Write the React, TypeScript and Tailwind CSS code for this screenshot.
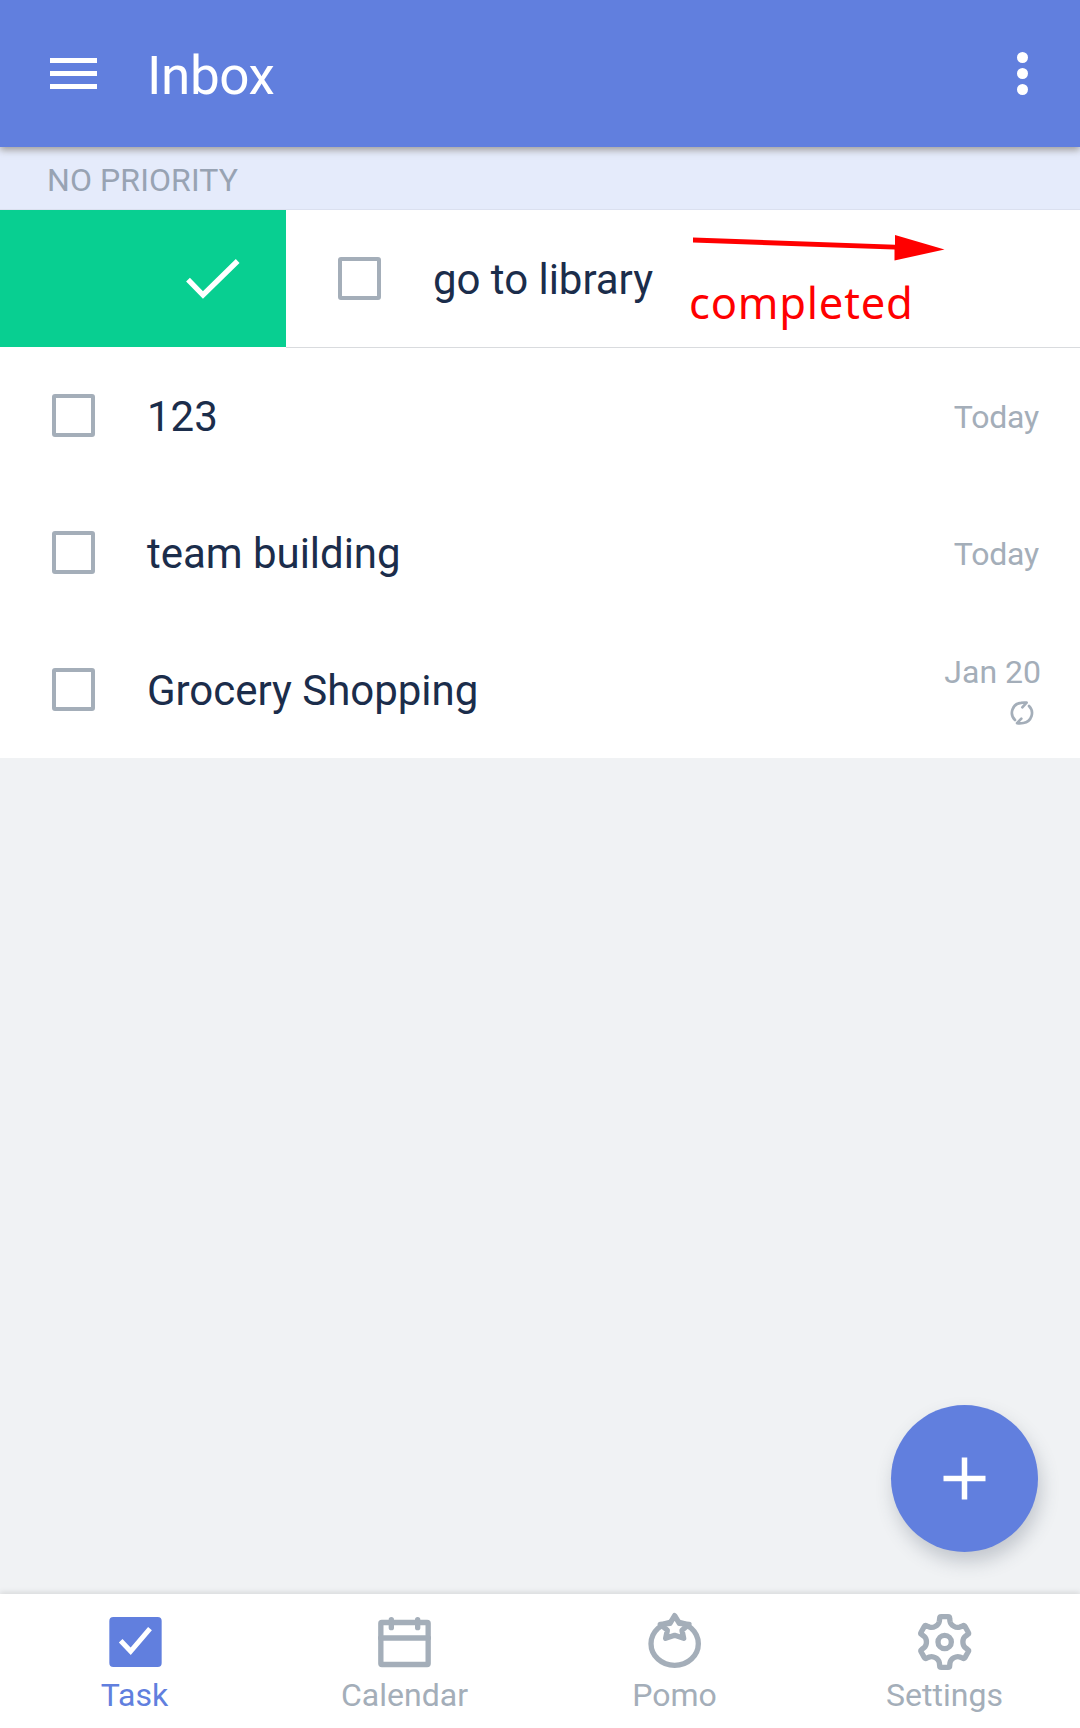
import React from "react";

const GRAY = "#a4aeb9";
const BLUE = "#617fde";

function Checkbox() {
  return <span className="block h-[43px] w-[43px] shrink-0 rounded-[3px] border-4 border-[#a4aeb9]" />;
}

function RepeatIcon() {
  return (
    <svg width="26" height="26" viewBox="387 180 78 78" fill="none" stroke={GRAY} strokeWidth="8" strokeLinecap="round" strokeLinejoin="round">
      <path d="M405 240A30 30 0 0 1 423 188.500Q432 187 440 188L427 202" />
      <path d="M447 198A30 30 0 0 1 430 249Q420 251 411 249.500L424 236" />
    </svg>
  );
}

function TaskRow({ title, date, repeat }: { title: string; date: string; repeat?: boolean }) {
  return (
    <li className="flex h-[137px] items-center bg-white pr-[41px] pl-[52px]">
      <Checkbox />
      <span className="ml-[52px] grow pt-[2px] text-[42px] leading-[50px] tracking-[-0.03px] text-[#1b2d4b]">{title}</span>
      <div className="flex flex-col items-end text-[32px] leading-[38px] tracking-[-0.2px] text-[#a4aeb9]">
        <span className={repeat ? "-mr-[2px] tracking-normal" : "mt-[3px]"}>{date}</span>
        {repeat && (
          <span className="mt-[9px] mr-[4px]">
            <RepeatIcon />
          </span>
        )}
      </div>
    </li>
  );
}

const gearPath = (() => {
  const cx = 224;
  const cy = 186;
  const at = (x: number, y: number, deg: number) => {
    const a = (deg * Math.PI) / 180;
    return `${(cx + x * Math.cos(a) - y * Math.sin(a)).toFixed(1)} ${(cy + x * Math.sin(a) + y * Math.cos(a)).toFixed(1)}`;
  };
  let d = "";
  for (let i = 0; i < 6; i++) {
    const r = i * 60;
    d += `${i === 0 ? "M" : "L"}${at(-10, -76, r)}L${at(10, -76, r)}Q${at(15, -76, r)} ${at(15, -71, r)}L${at(16, -62, r)}`;
    d += `C${at(18, -50, r)} ${at(-18, -50, r + 60)} ${at(-16, -62, r + 60)}L${at(-15, -71, r + 60)}Q${at(-15, -76, r + 60)} ${at(-10, -76, r + 60)}`;
  }
  return d + "Z";
})();

function NavItem({ label, active, children }: { label: string; active?: boolean; children: React.ReactNode }) {
  return (
    <button className={`flex flex-col items-center pt-4 ${active ? "text-[#617fde]" : "text-[#a4aeb9]"}`}>
      <svg width="60" height="62" viewBox="135 90 180 186" fill="none" stroke="currentColor" strokeWidth="16" strokeLinejoin="round" strokeLinecap="round">
        {children}
      </svg>
      <span className="mr-px text-[32px] leading-[46px]">{label}</span>
    </button>
  );
}

export default function App() {
  return (
    <div className="relative flex h-[1728px] w-[1080px] flex-col overflow-hidden bg-[#f0f2f4] font-['Roboto',sans-serif]">
      <header className="relative z-10 flex h-[147px] shrink-0 items-center bg-[#617fde] pr-[52px] pl-[50px] text-white shadow-[0_3px_7px_rgba(90,80,60,0.5)]">
        <div className="flex w-[47px] flex-col gap-[8px]">
          <span className="h-[5px] bg-white" />
          <span className="h-[5px] bg-white" />
          <span className="h-[5px] bg-white" />
        </div>
        <h1 className="ml-[50px] grow pt-[4px] text-[53px] leading-[60px] tracking-[-0.4px]">Inbox</h1>
        <div className="flex flex-col gap-[5px]">
          <span className="h-[11px] w-[11px] rounded-full bg-white" />
          <span className="h-[11px] w-[11px] rounded-full bg-white" />
          <span className="h-[11px] w-[11px] rounded-full bg-white" />
        </div>
      </header>

      <main className="grow">
        <h2 className="h-[63px] border-b border-[#dbe0ef] bg-[#e5ebfb] pt-[2px] pl-[47px] text-[32px] leading-[62px] tracking-[0.1px] text-[#98a3b3]">NO PRIORITY</h2>
        <ul>
          <li className="flex h-[137px] bg-white">
            <div className="flex w-[286px] shrink-0 items-center justify-end bg-[#08cf91] pr-[43px]">
              <svg width="60" height="46" viewBox="549 166 180 138" fill="none" stroke="white" strokeWidth="16">
                <path d="M564 237L609 283L713 181" />
              </svg>
            </div>
            <div className="relative flex grow items-center pl-[52px] shadow-[0_1px_0_#d9dbde]">
              <Checkbox />
              <span className="ml-[52px] pt-[2px] text-[42px] leading-[50px] tracking-[-0.03px] text-[#1b2d4b]">go to library</span>
              <svg className="absolute top-[23px] left-[406px]" width="254" height="30" viewBox="0 0 254 30">
                <path d="M1 4.500L203 11.700V2L252.500 16.500L202.500 27.500V16.600L1 9.500Z" fill="#ff0000" />
              </svg>
              <span className="absolute top-[62px] left-[403px] font-['Noto_Sans',sans-serif] text-[43.500px] leading-[60px] tracking-[0.8px] text-[#ff0000]">completed</span>
            </div>
          </li>
          <TaskRow title="123" date="Today" />
          <TaskRow title="team building" date="Today" />
          <TaskRow title="Grocery Shopping" date="Jan 20" repeat />
        </ul>
      </main>

      <button aria-label="Add task" className="absolute top-[1405px] left-[891px] flex h-[147px] w-[147px] items-center justify-center rounded-full bg-[#617fde] shadow-[3px_10px_18px_rgba(60,70,90,0.25)]">
        <svg width="43" height="43" viewBox="0 0 43 43" stroke="white" strokeWidth="5.500">
          <path d="M21.500 0.500V42.500M0.500 21.500H42.500" />
        </svg>
      </button>

      <nav className="grid h-[134px] shrink-0 grid-cols-4 bg-white shadow-[0_-2px_5px_rgba(60,60,60,0.13)]">
        <NavItem label="Task" active>
          <rect x="148" y="111" width="157" height="150" rx="12" fill={BLUE} stroke="none" />
          <path d="M182 182L212 214L270 146" stroke="white" strokeWidth="15" strokeLinecap="butt" strokeLinejoin="miter" />
        </NavItem>
        <NavItem label="Calendar">
          <rect x="152.500" y="127.500" width="142" height="126" rx="3" />
          <path d="M152 174H295M184 119V143M263 119V143" />
        </NavItem>
        <NavItem label="Pomo">
          <ellipse cx="224" cy="191" rx="71" ry="65" />
          <path d="M224 107L238 130L267 133L246 151L251 175L224 166L197 175L202 151L181 133L210 130Z" fill="white" />
        </NavItem>
        <NavItem label="Settings">
          <path d={gearPath} />
          <circle cx="224" cy="186" r="20" />
        </NavItem>
      </nav>
    </div>
  );
}
